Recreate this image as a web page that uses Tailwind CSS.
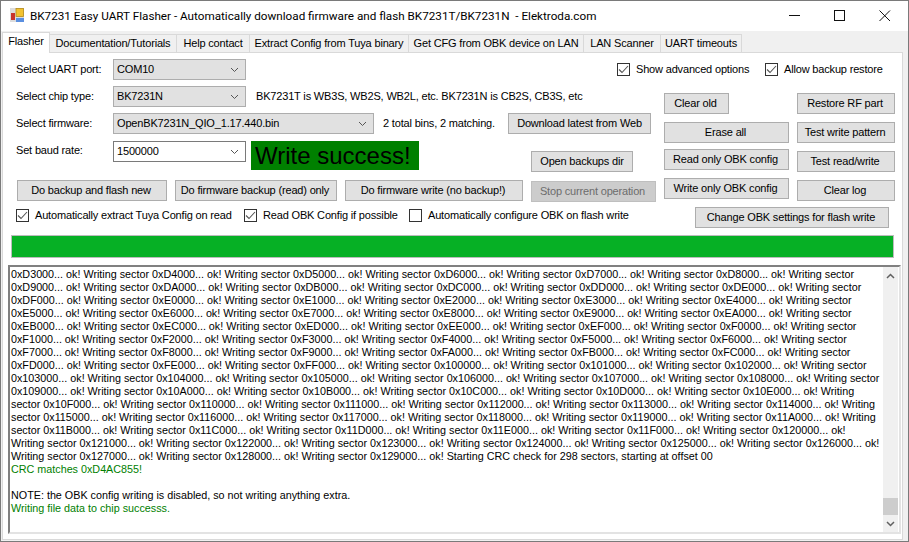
<!DOCTYPE html>
<html lang="en">
<head>
    <meta charset="UTF-8">
    <title>BK7231 Easy UART Flasher</title>
    <script src="https://cdn.jsdelivr.net/npm/@tailwindcss/browser@4"></script>
</head>
<body class="bg-white">
    <div class="w-[909px] h-[542px] overflow-hidden border border-[#7a7a7a] bg-[#f0f0f0] text-[11px] leading-[13px] tracking-[-0.17px] text-black font-['Liberation_Sans',sans-serif] flex flex-col">
        <!-- Title bar -->
        <div class="h-[30px] shrink-0 bg-white flex items-center pl-[9px]">
            <svg width="16" height="16" viewBox="0 0 16 16" class="shrink-0">
                <rect x="0" y="0" width="14" height="14" fill="#dcdcdc"/>
                <rect x="6" y="0.5" width="7.5" height="8" fill="#f2c230" stroke="#b58a18" stroke-width="0.8"/>
                <rect x="1" y="5" width="4" height="7" fill="#c8322a"/>
                <rect x="6" y="10" width="8" height="4" fill="#5a8fe0"/>
            </svg>
            <span class="ml-[4px] text-[11.7px] tracking-normal whitespace-pre font-['Roboto',sans-serif]">BK7231 Easy UART Flasher - Automatically download firmware and flash BK7231T/BK7231N  - Elektroda.com</span>
            <div class="ml-auto flex items-center h-[30px]">
                <svg width="46" height="30" viewBox="0 0 46 30"><path d="M19 14.5H30" stroke="#111" stroke-width="1"/></svg>
                <svg width="46" height="30" viewBox="0 0 46 30"><rect x="18.5" y="9.5" width="10" height="10" fill="none" stroke="#111"/></svg>
                <svg width="46" height="30" viewBox="0 0 46 30"><path d="M17.5 9.5L28 20M28 9.5L17.5 20" stroke="#111" stroke-width="1"/></svg>
            </div>
        </div>

        <!-- Tabs -->
        <div class="h-[21px] shrink-0 flex items-end pl-[1px] relative z-10 whitespace-nowrap">
            <div class="h-[21px] w-[48px] -mb-[1px] bg-white border border-b-0 border-[#d9d9d9] flex items-center justify-center pb-[3px]">Flasher</div>
            <div class="h-[18px] w-[127px] border border-b-0 border-l-0 border-[#d9d9d9] flex items-center justify-center">Documentation/Tutorials</div>
            <div class="h-[18px] w-[73px] border border-b-0 border-l-0 border-[#d9d9d9] flex items-center justify-center">Help contact</div>
            <div class="h-[18px] w-[159px] border border-b-0 border-l-0 border-[#d9d9d9] flex items-center justify-center">Extract Config from Tuya binary</div>
            <div class="h-[18px] w-[175px] border border-b-0 border-l-0 border-[#d9d9d9] flex items-center justify-center">Get CFG from OBK device on LAN</div>
            <div class="h-[18px] w-[77px] border border-b-0 border-l-0 border-[#d9d9d9] flex items-center justify-center">LAN Scanner</div>
            <div class="h-[18px] w-[81px] border border-b-0 border-l-0 border-[#d9d9d9] flex items-center justify-center">UART timeouts</div>
        </div>

        <!-- Panel -->
        <div class="flex-1 min-h-0 bg-white ml-[1px] mr-[5px] mb-[1px] border border-[#d9d9d9] flex flex-col whitespace-nowrap">
            <!-- First row -->
            <div class="flex items-center h-[21px] mt-[6px] pl-[13px] shrink-0">
                <span class="w-[97px]">Select UART port:</span>
                <div class="w-[133px] h-[21px] bg-[#e1e1e1] border border-[#adadad] flex items-center justify-between pl-[3px] pr-[6px]">COM10
                    <svg width="9" height="6" viewBox="0 0 9 6"><path d="M1 1L4.5 4.5L8 1" fill="none" stroke="#555"/></svg>
                </div>
                <label class="ml-[371px] flex items-center gap-[6px] w-[148px]"><span class="w-[13px] h-[13px] border border-[#333] flex items-center justify-center"><svg width="11" height="9" viewBox="0 0 11 9"><path d="M1 4.5L4 7.5L10 1" fill="none" stroke="#555" stroke-width="1.1"/></svg></span>Show advanced options</label>
                <label class="flex items-center gap-[6px]"><span class="w-[13px] h-[13px] border border-[#333] flex items-center justify-center"><svg width="11" height="9" viewBox="0 0 11 9"><path d="M1 4.5L4 7.5L10 1" fill="none" stroke="#555" stroke-width="1.1"/></svg></span>Allow backup restore</label>
            </div>

            <div class="flex h-[148px] shrink-0">
                <!-- Left controls -->
                <div class="w-[661px] shrink-0 pl-[13px] pt-[6px]">
                    <div class="flex items-center h-[21px]">
                        <span class="w-[97px]">Select chip type:</span>
                        <div class="w-[133px] h-[21px] bg-[#e1e1e1] border border-[#adadad] flex items-center justify-between pl-[3px] pr-[6px]">BK7231N
                            <svg width="9" height="6" viewBox="0 0 9 6"><path d="M1 1L4.5 4.5L8 1" fill="none" stroke="#555"/></svg>
                        </div>
                        <span class="ml-[10px]">BK7231T is WB3S, WB2S, WB2L, etc. BK7231N is CB2S, CB3S, etc</span>
                    </div>
                    <div class="flex items-center h-[21px] mt-[6px]">
                        <span class="w-[97px]">Select firmware:</span>
                        <div class="w-[261px] h-[21px] bg-[#e1e1e1] border border-[#adadad] flex items-center justify-between pl-[3px] pr-[6px]">OpenBK7231N_QIO_1.17.440.bin
                            <svg width="9" height="6" viewBox="0 0 9 6"><path d="M1 1L4.5 4.5L8 1" fill="none" stroke="#555"/></svg>
                        </div>
                        <span class="ml-[9px] w-[125px]">2 total bins, 2 matching.</span>
                        <button class="w-[143px] h-[21px] bg-[#e1e1e1] border border-[#adadad]">Download latest from Web</button>
                    </div>
                    <div class="flex items-start h-[31px] mt-[7px]">
                        <span class="w-[97px] mt-[3px]">Set baud rate:</span>
                        <div class="w-[133px] h-[21px] bg-white border border-[#7a7a7a] flex items-center justify-between pl-[3px] pr-[6px]">1500000
                            <svg width="9" height="6" viewBox="0 0 9 6"><path d="M1 1L4.5 4.5L8 1" fill="none" stroke="#555"/></svg>
                        </div>
                        <div class="ml-[5px] w-[168px] h-[29px] bg-[#008000] text-[24px] leading-[29px] tracking-normal pl-[4px]">Write success!</div>
                        <button class="ml-[112px] mt-[10px] w-[102px] h-[21px] bg-[#e1e1e1] border border-[#adadad]">Open backups dir</button>
                    </div>
                    <div class="flex items-start gap-[8px] h-[22px] mt-[8px] pl-[1px]">
                        <button class="w-[150px] h-[21px] bg-[#e1e1e1] border border-[#adadad] pr-[2px]">Do backup and flash new</button>
                        <button class="w-[162px] h-[21px] bg-[#e1e1e1] border border-[#adadad] pr-[2px]">Do firmware backup (read) only</button>
                        <button class="w-[178px] h-[21px] bg-[#e1e1e1] border border-[#adadad] pr-[2px]">Do firmware write (no backup!)</button>
                        <button class="w-[125px] h-[21px] mt-[1px] bg-[#cccccc] border border-[#bfbfbf] text-[#6d6d6d] pr-[2px]">Stop current operation</button>
                    </div>
                    <div class="flex items-center h-[13px] mt-[7px]">
                        <label class="flex items-center gap-[6px] w-[228px]"><span class="w-[13px] h-[13px] border border-[#333] flex items-center justify-center"><svg width="11" height="9" viewBox="0 0 11 9"><path d="M1 4.5L4 7.5L10 1" fill="none" stroke="#555" stroke-width="1.1"/></svg></span>Automatically extract Tuya Config on read</label>
                        <label class="flex items-center gap-[6px] w-[165px]"><span class="w-[13px] h-[13px] border border-[#333] flex items-center justify-center"><svg width="11" height="9" viewBox="0 0 11 9"><path d="M1 4.5L4 7.5L10 1" fill="none" stroke="#555" stroke-width="1.1"/></svg></span>Read OBK Config if possible</label>
                        <label class="flex items-center gap-[6px]"><span class="w-[13px] h-[13px] border border-[#333]"></span>Automatically configure OBK on flash write</label>
                    </div>
                </div>
                <!-- Right controls -->
                <div class="pt-[13px]">
                    <div class="flex gap-[8px]">
                        <div class="w-[125px] flex flex-col">
                            <button class="w-[65px] h-[21px] bg-[#e1e1e1] border border-[#adadad] pr-[2px]">Clear old</button>
                            <button class="h-[21px] mt-[8px] bg-[#e1e1e1] border border-[#adadad] pr-[2px]">Erase all</button>
                            <button class="h-[21px] mt-[6px] bg-[#e1e1e1] border border-[#adadad] pr-[2px]">Read only OBK config</button>
                            <button class="h-[21px] mt-[8px] bg-[#e1e1e1] border border-[#adadad] pr-[2px]">Write only OBK config</button>
                        </div>
                        <div class="w-[98px] flex flex-col gap-[8px]">
                            <button class="h-[21px] bg-[#e1e1e1] border border-[#adadad] pr-[2px]">Restore RF part</button>
                            <button class="h-[21px] bg-[#e1e1e1] border border-[#adadad] pr-[2px]">Test write pattern</button>
                            <button class="h-[21px] bg-[#e1e1e1] border border-[#adadad] pr-[2px]">Test read/write</button>
                            <button class="h-[21px] bg-[#e1e1e1] border border-[#adadad] pr-[2px]">Clear log</button>
                        </div>
                    </div>
                    <button class="ml-[31px] mt-[6px] w-[194px] h-[21px] bg-[#e1e1e1] border border-[#adadad] pr-[2px]">Change OBK settings for flash write</button>
                </div>
            </div>

            <!-- Progress bar -->
            <div class="h-[23px] w-[883px] ml-[8px] mt-[7px] bg-[#06b025] border border-[#bcbcbc] shrink-0"></div>

            <!-- Log -->
            <div class="flex-1 min-h-0 ml-[5px] mr-[1px] mb-[5px] mt-[7px] border-2 border-l-[#808080] border-t-[#808080] border-r-[#e3e3e3] border-b-[#e3e3e3] bg-white flex overflow-hidden">
                <div class="flex-1 pl-[1px] pt-[1px] text-[10.78px] tracking-normal">
                    <div>0xD3000... ok! Writing sector 0xD4000... ok! Writing sector 0xD5000... ok! Writing sector 0xD6000... ok! Writing sector 0xD7000... ok! Writing sector 0xD8000... ok! Writing sector</div>
                    <div>0xD9000... ok! Writing sector 0xDA000... ok! Writing sector 0xDB000... ok! Writing sector 0xDC000... ok! Writing sector 0xDD000... ok! Writing sector 0xDE000... ok! Writing sector</div>
                    <div>0xDF000... ok! Writing sector 0xE0000... ok! Writing sector 0xE1000... ok! Writing sector 0xE2000... ok! Writing sector 0xE3000... ok! Writing sector 0xE4000... ok! Writing sector</div>
                    <div>0xE5000... ok! Writing sector 0xE6000... ok! Writing sector 0xE7000... ok! Writing sector 0xE8000... ok! Writing sector 0xE9000... ok! Writing sector 0xEA000... ok! Writing sector</div>
                    <div>0xEB000... ok! Writing sector 0xEC000... ok! Writing sector 0xED000... ok! Writing sector 0xEE000... ok! Writing sector 0xEF000... ok! Writing sector 0xF0000... ok! Writing sector</div>
                    <div>0xF1000... ok! Writing sector 0xF2000... ok! Writing sector 0xF3000... ok! Writing sector 0xF4000... ok! Writing sector 0xF5000... ok! Writing sector 0xF6000... ok! Writing sector</div>
                    <div>0xF7000... ok! Writing sector 0xF8000... ok! Writing sector 0xF9000... ok! Writing sector 0xFA000... ok! Writing sector 0xFB000... ok! Writing sector 0xFC000... ok! Writing sector</div>
                    <div>0xFD000... ok! Writing sector 0xFE000... ok! Writing sector 0xFF000... ok! Writing sector 0x100000... ok! Writing sector 0x101000... ok! Writing sector 0x102000... ok! Writing sector</div>
                    <div>0x103000... ok! Writing sector 0x104000... ok! Writing sector 0x105000... ok! Writing sector 0x106000... ok! Writing sector 0x107000... ok! Writing sector 0x108000... ok! Writing sector</div>
                    <div>0x109000... ok! Writing sector 0x10A000... ok! Writing sector 0x10B000... ok! Writing sector 0x10C000... ok! Writing sector 0x10D000... ok! Writing sector 0x10E000... ok! Writing</div>
                    <div>sector 0x10F000... ok! Writing sector 0x110000... ok! Writing sector 0x111000... ok! Writing sector 0x112000... ok! Writing sector 0x113000... ok! Writing sector 0x114000... ok! Writing</div>
                    <div>sector 0x115000... ok! Writing sector 0x116000... ok! Writing sector 0x117000... ok! Writing sector 0x118000... ok! Writing sector 0x119000... ok! Writing sector 0x11A000... ok! Writing</div>
                    <div>sector 0x11B000... ok! Writing sector 0x11C000... ok! Writing sector 0x11D000... ok! Writing sector 0x11E000... ok! Writing sector 0x11F000... ok! Writing sector 0x120000... ok!</div>
                    <div>Writing sector 0x121000... ok! Writing sector 0x122000... ok! Writing sector 0x123000... ok! Writing sector 0x124000... ok! Writing sector 0x125000... ok! Writing sector 0x126000... ok!</div>
                    <div>Writing sector 0x127000... ok! Writing sector 0x128000... ok! Writing sector 0x129000... ok! Starting CRC check for 298 sectors, starting at offset 00</div>
                    <div class="text-[#008000]">CRC matches 0xD4AC855!</div>
                    <div class="h-[13px]"></div>
                    <div>NOTE: the OBK config writing is disabled, so not writing anything extra.</div>
                    <div class="text-[#008000]">Writing file data to chip successs.</div>
                </div>
                <!-- Scrollbar -->
                <div class="w-[15px] mr-[1px] bg-[#f0f0f0] shrink-0 flex flex-col">
                    <div class="h-[17px] flex items-center justify-center"><svg width="9" height="6" viewBox="0 0 9 6"><path d="M1 5L4.5 1.5L8 5" fill="none" stroke="#606060" stroke-width="1.5"/></svg></div>
                    <div class="flex-1 flex flex-col justify-end"><div class="h-[17px] bg-[#cdcdcd]"></div></div>
                    <div class="h-[17px] flex items-center justify-center"><svg width="9" height="6" viewBox="0 0 9 6"><path d="M1 1L4.5 4.5L8 1" fill="none" stroke="#606060" stroke-width="1.5"/></svg></div>
                </div>
            </div>
        </div>
    </div>
</body>
</html>
